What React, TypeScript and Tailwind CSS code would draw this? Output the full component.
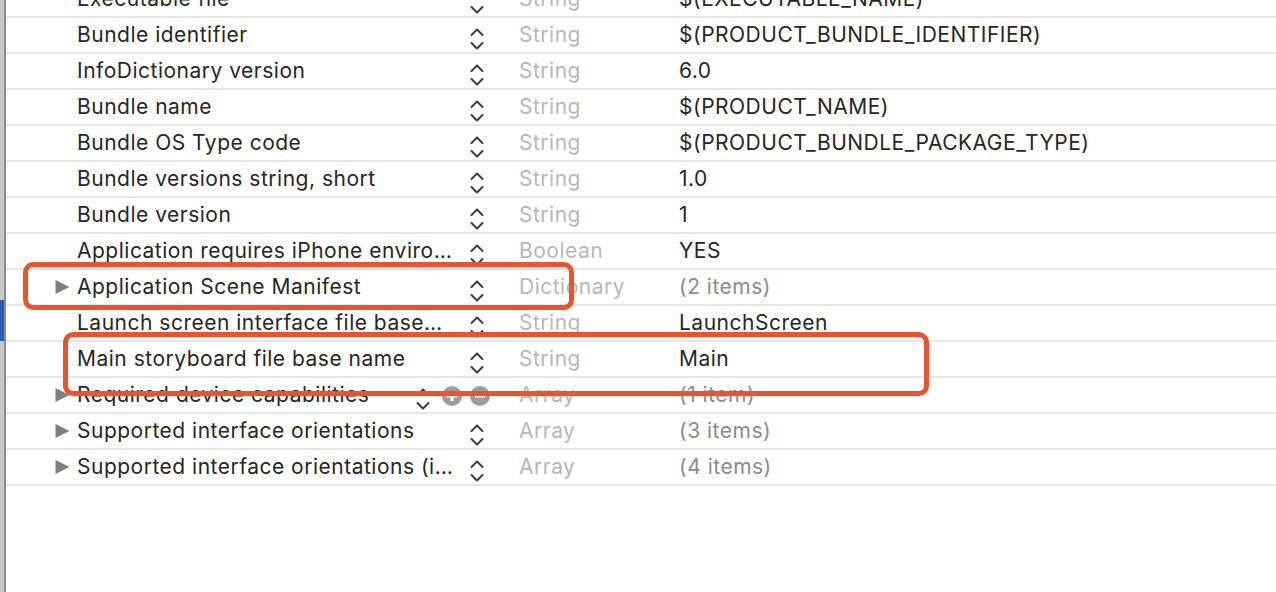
import React from "react";

type Row = {
  key: string;
  type: string;
  value: string;
  expandable?: boolean;
  muted?: boolean;
  hover?: boolean;
};

const rows: Row[] = [
  { key: "Executable file", type: "String", value: "$(EXECUTABLE_NAME)" },
  { key: "Bundle identifier", type: "String", value: "$(PRODUCT_BUNDLE_IDENTIFIER)" },
  { key: "InfoDictionary version", type: "String", value: "6.0" },
  { key: "Bundle name", type: "String", value: "$(PRODUCT_NAME)" },
  { key: "Bundle OS Type code", type: "String", value: "$(PRODUCT_BUNDLE_PACKAGE_TYPE)" },
  { key: "Bundle versions string, short", type: "String", value: "1.0" },
  { key: "Bundle version", type: "String", value: "1" },
  { key: "Application requires iPhone enviro…", type: "Boolean", value: "YES" },
  { key: "Application Scene Manifest", type: "Dictionary", value: "(2 items)", expandable: true, muted: true },
  { key: "Launch screen interface file base…", type: "String", value: "LaunchScreen" },
  { key: "Main storyboard file base name", type: "String", value: "Main" },
  { key: "Required device capabilities", type: "Array", value: "(1 item)", expandable: true, muted: true, hover: true },
  { key: "Supported interface orientations", type: "Array", value: "(3 items)", expandable: true, muted: true },
  { key: "Supported interface orientations (i…", type: "Array", value: "(4 items)", expandable: true, muted: true },
];

function Stepper() {
  return (
    <svg width="16" height="34" viewBox="0 0 16 34" fill="none">
      <path d="M2.5 17 L8 11.5 L13.5 17" stroke="#3d3d3d" strokeWidth="2" strokeLinecap="round" strokeLinejoin="round" />
      <path d="M2.5 25 L8 30.5 L13.5 25" stroke="#3d3d3d" strokeWidth="2" strokeLinecap="round" strokeLinejoin="round" />
    </svg>
  );
}

function Disclosure() {
  return (
    <svg width="15" height="16" viewBox="0 0 15 16">
      <path d="M0.5 1 L14.5 8 L0.5 15 Z" fill="#7f7f7f" />
    </svg>
  );
}

function PlistRow({ row }: { row: Row }) {
  return (
    <div className="relative flex h-[36px] items-center border-b-2 border-[#e6e6e6]">
      <div className="w-[49px] shrink-0" />
      <div className="flex w-[22px] shrink-0 items-center">
        {row.expandable && <Disclosure />}
      </div>
      <div className="w-[385px] shrink-0 whitespace-nowrap text-[#262626]">{row.key}</div>
      <div className="flex h-full w-[30px] shrink-0 justify-center">
        {!row.hover && <Stepper />}
      </div>
      <div className="w-[27px] shrink-0" />
      <div className="w-[160px] shrink-0 text-[#b8b8b8]">{row.type}</div>
      <div className={row.muted ? "text-[#8c8c8c]" : "text-[#262626]"}>{row.value}</div>
      {row.hover && (
        <div className="absolute left-[409px] top-0 flex h-full items-center">
          <Stepper />
          <span className="ml-[11px] mt-[2px] flex h-[20px] w-[20px] items-center justify-center rounded-full bg-[#9c9c9c]">
            <svg width="12" height="12" viewBox="0 0 12 12">
              <path d="M6 1 V11 M1 6 H11" stroke="white" strokeWidth="3" />
            </svg>
          </span>
          <span className="ml-[8px] mt-[2px] flex h-[20px] w-[20px] items-center justify-center rounded-full bg-[#9c9c9c]">
            <svg width="12" height="12" viewBox="0 0 12 12">
              <path d="M1 6 H11" stroke="white" strokeWidth="3" />
            </svg>
          </span>
        </div>
      )}
    </div>
  );
}

export default function App() {
  return (
    <div
      className="relative flex h-[592px] w-[1276px] overflow-hidden bg-white text-[21px] tracking-[0.5px]"
      style={{ fontFamily: "Inter, 'Liberation Sans', sans-serif" }}
    >
      <div className="flex w-[4px] shrink-0 flex-col">
        <div className="h-[300px] bg-[#c9c9c9]" />
        <div className="h-[41px] bg-[#2a5cb4]" />
        <div className="flex-1 bg-[#c9c9c9]" />
      </div>
      <div className="w-[2px] shrink-0 bg-[#8d8d8d]" />
      <div className="flex-1 overflow-hidden">
        <div className="-mt-[18px]">
          {rows.map((row) => (
            <PlistRow key={row.key} row={row} />
          ))}
        </div>
      </div>

      <div className="pointer-events-none absolute left-[23px] top-[262px] h-[48px] w-[551px] rounded-[10px] border-[5px] border-[#ea532b]" />
      <div className="pointer-events-none absolute left-[63px] top-[332px] h-[64px] w-[866px] rounded-[10px] border-[5px] border-[#ea532b]" />
    </div>
  );
}
